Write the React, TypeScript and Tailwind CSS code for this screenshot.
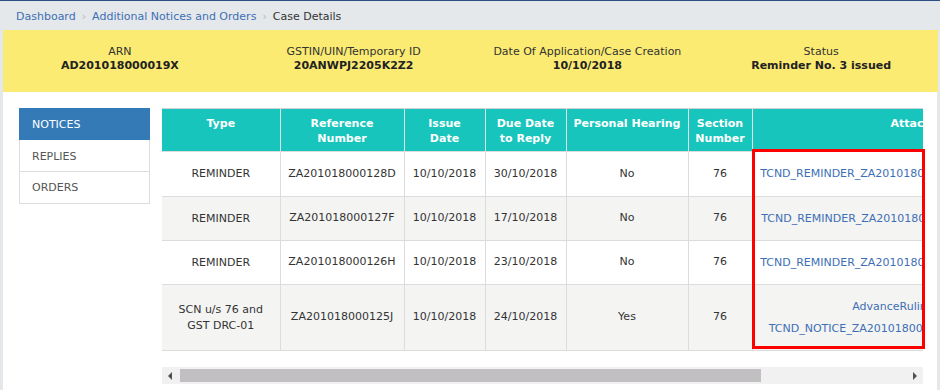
import React from "react";

const font = { fontFamily: '"DejaVu Sans", Verdana, sans-serif' };

type Row = {
  type: string[];
  ref: string;
  issue: string;
  due: string;
  hearing: string;
  section: string;
  files: string[];
  shade: boolean;
};

const rows: Row[] = [
  { type: ["REMINDER"], ref: "ZA201018000128D", issue: "10/10/2018", due: "30/10/2018", hearing: "No", section: "76", files: ["TCND_REMINDER_ZA201018000128D_10102018_Ref_001.pdf"], shade: false },
  { type: ["REMINDER"], ref: "ZA201018000127F", issue: "10/10/2018", due: "17/10/2018", hearing: "No", section: "76", files: ["TCND_REMINDER_ZA201018000127F_10102018_Ref_001.pdf"], shade: true },
  { type: ["REMINDER"], ref: "ZA201018000126H", issue: "10/10/2018", due: "23/10/2018", hearing: "No", section: "76", files: ["TCND_REMINDER_ZA201018000126H_10102018_Ref_001.pdf"], shade: false },
  { type: ["SCN u/s 76 and", "GST DRC-01"], ref: "ZA201018000125J", issue: "10/10/2018", due: "24/10/2018", hearing: "Yes", section: "76", files: ["AdvanceRuling_Doc_001.pdf", "TCND_NOTICE_ZA201018000125J_10102018_SCN_001.pdf"], shade: true },
];

const headers: { label: string[]; w: string }[] = [
  { label: ["Type"], w: "w-[118px]" },
  { label: ["Reference", "Number"], w: "w-[124px]" },
  { label: ["Issue", "Date"], w: "w-[81px]" },
  { label: ["Due Date", "to Reply"], w: "w-[81px]" },
  { label: ["Personal Hearing"], w: "w-[122px]" },
  { label: ["Section", "Number"], w: "w-[64px]" },
  { label: ["Attachments"], w: "w-[356px]" },
];

export default function App() {
  return (
    <div className="w-[940px] h-[390px] bg-[#e4e8eb] overflow-hidden text-[11px] text-[#333]" style={font}>
      <div className="h-[1px] bg-[#2b4e86]" />
      {/* breadcrumb */}
      <div className="h-[29px] flex items-center pl-[16px] pt-[2px] gap-[6px] leading-none">
        <span className="text-[#3d6fb5]">Dashboard</span>
        <span className="text-[#b5b8bb]">›</span>
        <span className="text-[#3d6fb5]">Additional Notices and Orders</span>
        <span className="text-[#b5b8bb]">›</span>
        <span className="text-[#333]">Case Details</span>
      </div>
      {/* yellow band */}
      <div className="ml-[3px] w-[935px] h-[62px] bg-[#fbeb72] grid grid-cols-4 pt-[15px] leading-[14px]">
        {[
          ["ARN", "AD201018000019X"],
          ["GSTIN/UIN/Temporary ID", "20ANWPJ2205K2Z2"],
          ["Date Of Application/Case Creation", "10/10/2018"],
          ["Status", "Reminder No. 3 issued"],
        ].map(([l, v]) => (
          <div key={l} className="flex flex-col items-center">
            <span className="text-[#333]">{l}</span>
            <span className="font-bold text-[#222]">{v}</span>
          </div>
        ))}
      </div>
      {/* content */}
      <div className="ml-[3px] w-[934px] h-[298px] bg-white flex pt-[16px] pl-[16px] gap-[12px]">
        {/* sidebar */}
        <div className="w-[131px] flex flex-col self-start border border-[#ddd] border-t-0">
          <div className="h-[32px] bg-[#337ab7] text-white flex items-center pl-[13px] pt-[3px] -mx-[1px]">NOTICES</div>
          <div className="h-[32px] flex items-center pl-[12px] pt-[3px] text-[#555] border-b border-[#ddd]">REPLIES</div>
          <div className="h-[31px] flex items-center pl-[12px] pt-[2px] text-[#555]">ORDERS</div>
        </div>
        {/* table area */}
        <div className="w-[761px] flex flex-col">
          <div className="relative">
            <div className="w-[761px] overflow-hidden border-t border-[#cfd4d4]">
              <table className="border-collapse table-fixed w-[946px]">
                <thead>
                  <tr className="bg-[#17c5bc] text-white font-bold">
                    {headers.map((h, i) => (
                      <th key={i} className={`${h.w} h-[42px] align-top pt-[7px] font-bold leading-[15px] ${i > 0 ? "border-l border-[#dfe3e3]" : ""}`}>
                        {h.label.map((t) => (
                          <div key={t} className="whitespace-nowrap">{t}</div>
                        ))}
                      </th>
                    ))}
                  </tr>
                </thead>
                <tbody>
                  {rows.map((r, ri) => (
                    <tr key={ri} className={`${r.shade ? "bg-[#f4f4f3]" : "bg-white"} border-t border-[#dcdcdc] ${ri === 3 ? "h-[66px]" : ri === 0 ? "h-[45px]" : "h-[44px]"}`}>
                      <td className="text-center align-middle leading-[16px] pt-[1px]">
                        {r.type.map((t) => (
                          <div key={t}>{t}</div>
                        ))}
                      </td>
                      <td className="text-center border-l border-[#dcdcdc] pt-[1px]">{r.ref}</td>
                      <td className="text-center border-l border-[#dcdcdc] pt-[1px]">{r.issue}</td>
                      <td className="text-center border-l border-[#dcdcdc] pt-[1px]">{r.due}</td>
                      <td className="text-center border-l border-[#dcdcdc] pt-[1px]">{r.hearing}</td>
                      <td className="text-center border-l border-[#dcdcdc] pt-[1px]">{r.section}</td>
                      <td className="text-center border-l border-[#dcdcdc] whitespace-nowrap text-[#3d6fb5] leading-[22px] pt-[1px]">
                        {r.files.map((f) => (
                          <div key={f}>{f}</div>
                        ))}
                      </td>
                    </tr>
                  ))}
                  <tr className="border-t border-[#dcdcdc]"><td colSpan={7} className="h-0 p-0" /></tr>
                </tbody>
              </table>
            </div>
            {/* annotation box */}
            <div className="absolute left-[590px] top-[41px] w-[173px] h-[200px] border-[3px] border-[#f00]" />
          </div>
          {/* horizontal scrollbar */}
          <div className="mt-[16px] h-[17px] bg-[#f1f1f1] flex items-center relative">
            <svg className="absolute left-[5px] top-[5px]" width="6" height="8" viewBox="0 0 6 8">
              <polygon points="5,0 5,8 1,4" fill="#505050" />
            </svg>
            <div className="absolute left-[18px] top-[2px] w-[581px] h-[13px] bg-[#c1bfc1]" />
            <svg className="absolute right-[5px] top-[5px]" width="6" height="8" viewBox="0 0 6 8">
              <polygon points="1,0 1,8 5,4" fill="#505050" />
            </svg>
          </div>
        </div>
      </div>
    </div>
  );
}
